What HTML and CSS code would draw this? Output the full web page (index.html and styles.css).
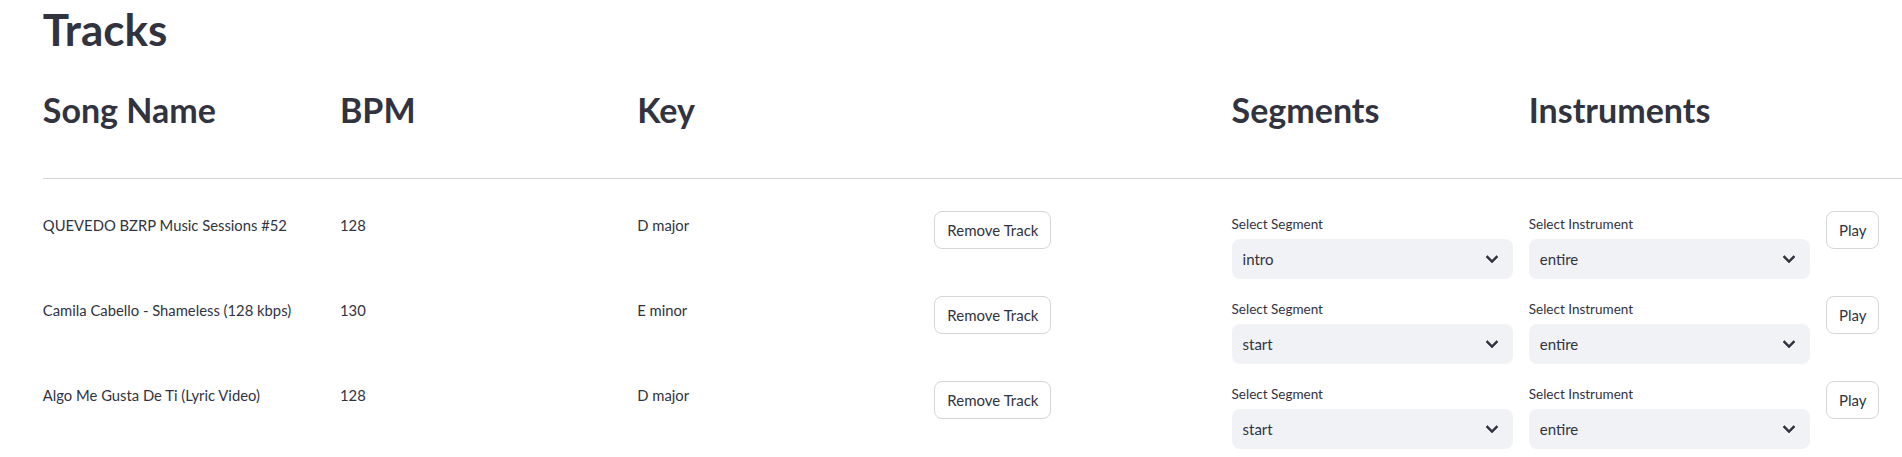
FILE: index.html
```html
<!DOCTYPE html>
<html lang="en">
<head>
<meta charset="utf-8">
<title>Tracks</title>
<link rel="stylesheet" href="styles.css">
</head>
<body>
<div class="page">
  <h1 class="title">Tracks</h1>
  <div class="grid head">
    <h2 class="col-title">Song Name</h2>
    <h2 class="col-title">BPM</h2>
    <h2 class="col-title">Key</h2>
    <div></div>
    <h2 class="col-title">Segments</h2>
    <h2 class="col-title">Instruments</h2>
    <div></div>
  </div>
  <hr class="divider">
  <div class="rows">
    <div class="grid row">
      <p class="cell">QUEVEDO BZRP Music Sessions #52</p>
      <p class="cell">128</p>
      <p class="cell">D major</p>
      <div><button class="btn">Remove Track</button></div>
      <div class="field">
        <div class="label">Select Segment</div>
        <div class="select"><span>intro</span><svg class="chev" viewBox="0 0 24 24" width="24" height="24"><path d="M16.59 8.59L12 13.17 7.41 8.59 6 10l6 6 6-6z"/></svg></div>
      </div>
      <div class="field">
        <div class="label">Select Instrument</div>
        <div class="select"><span>entire</span><svg class="chev" viewBox="0 0 24 24" width="24" height="24"><path d="M16.59 8.59L12 13.17 7.41 8.59 6 10l6 6 6-6z"/></svg></div>
      </div>
      <div><button class="btn">Play</button></div>
    </div>
    <div class="grid row">
      <p class="cell">Camila Cabello - Shameless (128 kbps)</p>
      <p class="cell">130</p>
      <p class="cell">E minor</p>
      <div><button class="btn">Remove Track</button></div>
      <div class="field">
        <div class="label">Select Segment</div>
        <div class="select"><span>start</span><svg class="chev" viewBox="0 0 24 24" width="24" height="24"><path d="M16.59 8.59L12 13.17 7.41 8.59 6 10l6 6 6-6z"/></svg></div>
      </div>
      <div class="field">
        <div class="label">Select Instrument</div>
        <div class="select"><span>entire</span><svg class="chev" viewBox="0 0 24 24" width="24" height="24"><path d="M16.59 8.59L12 13.17 7.41 8.59 6 10l6 6 6-6z"/></svg></div>
      </div>
      <div><button class="btn">Play</button></div>
    </div>
    <div class="grid row">
      <p class="cell">Algo Me Gusta De Ti (Lyric Video)</p>
      <p class="cell">128</p>
      <p class="cell">D major</p>
      <div><button class="btn">Remove Track</button></div>
      <div class="field">
        <div class="label">Select Segment</div>
        <div class="select"><span>start</span><svg class="chev" viewBox="0 0 24 24" width="24" height="24"><path d="M16.59 8.59L12 13.17 7.41 8.59 6 10l6 6 6-6z"/></svg></div>
      </div>
      <div class="field">
        <div class="label">Select Instrument</div>
        <div class="select"><span>entire</span><svg class="chev" viewBox="0 0 24 24" width="24" height="24"><path d="M16.59 8.59L12 13.17 7.41 8.59 6 10l6 6 6-6z"/></svg></div>
      </div>
      <div><button class="btn">Play</button></div>
    </div>
  </div>
</div>
</body>
</html>
```
FILE: styles.css
```css
html, body {
  margin: 0;
  padding: 0;
  background: #ffffff;
}
body {
  width: 1902px;
  height: 457px;
  overflow: hidden;
  font-family: Lato, "Open Sans", "Liberation Sans", sans-serif;
  color: #31333f;
}
.page {
  width: 2200px;
  padding-left: 42.8px;
  box-sizing: border-box;
}
.title {
  margin: 0;
  padding-top: 2.5px;
  height: 53.7px;
  box-sizing: border-box;
  font-size: 44px;
  font-weight: 700;
  line-height: 1.2;
}
.grid {
  display: grid;
  grid-template-columns: repeat(7, 281.2px);
  column-gap: 16px;
}
.head {
  margin-top: 36px;
}
.col-title {
  margin: 0;
  font-size: 34px;
  font-weight: 700;
  line-height: 40px;
}
.divider {
  margin: 48px 0 0 0;
  border: none;
  height: 1px;
  background: #d6d6d9;
}
.rows {
  margin-top: 32px;
  display: flex;
  flex-direction: column;
  gap: 16px;
}
.row {
  height: 69px;
  align-items: start;
}
.cell {
  margin: 0;
  padding-top: 2px;
  font-size: 14.8px;
  line-height: 25.6px;
}
.btn {
  box-sizing: border-box;
  height: 38px;
  padding: 0 12px;
  border: 1px solid #d6d6d9;
  border-radius: 8px;
  background: #ffffff;
  color: #31333f;
  font-family: inherit;
  font-size: 15px;
  line-height: 36px;
  margin-top: 0.5px;
}
.field {
  display: flex;
  flex-direction: column;
}
.label {
  height: 28px;
  box-sizing: border-box;
  padding-top: 3px;
  font-size: 13.5px;
  line-height: 20px;
}
.select {
  box-sizing: border-box;
  height: 40px;
  border-radius: 8px;
  background: #f0f2f6;
  display: flex;
  align-items: center;
  justify-content: space-between;
  padding: 0 9px 0 11px;
  font-size: 15px;
}
.chev {
  fill: #31333f;
  stroke: #31333f;
  stroke-width: 0.6;
}
```
